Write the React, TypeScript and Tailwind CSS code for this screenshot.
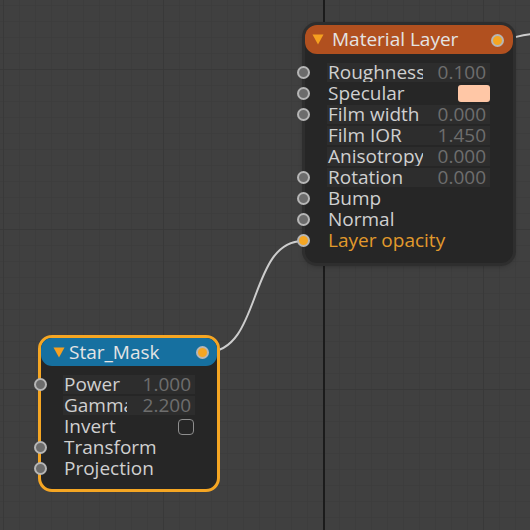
import * as React from "react";

type Row = {
  label: string;
  value?: string;
  socket?: boolean;
  kind?: "num" | "color" | "check" | "plain";
  active?: boolean;
};

const materialRows: Row[] = [
  { label: "Roughness", value: "0.100", socket: true, kind: "num" },
  { label: "Specular", socket: true, kind: "color" },
  { label: "Film width", value: "0.000", socket: true, kind: "num" },
  { label: "Film IOR", value: "1.450", kind: "num" },
  { label: "Anisotropy", value: "0.000", kind: "num" },
  { label: "Rotation", value: "0.000", socket: true, kind: "num" },
  { label: "Bump", socket: true },
  { label: "Normal", socket: true },
  { label: "Layer opacity", socket: true, active: true },
];

const maskRows: Row[] = [
  { label: "Power", value: "1.000", socket: true, kind: "num" },
  { label: "Gamma", value: "2.200", kind: "num" },
  { label: "Invert", kind: "check" },
  { label: "Transform", socket: true },
  { label: "Projection", socket: true },
];

function Socket({ active, className }: { active?: boolean; className?: string }) {
  return (
    <span
      className={
        "absolute h-[13px] w-[13px] rounded-full border-2 border-[#b6b6b6] " +
        (active ? "bg-[#f5a623] " : "bg-[#6c6c6c] ") +
        (className || "")
      }
    />
  );
}

function NodeRow({ row, labelW, socketX }: { row: Row; labelW: number; socketX: string }) {
  return (
    <div className="relative flex h-[21px] items-center">
      {row.socket && <Socket active={row.active} className={socketX} />}
      {row.kind === "num" ? (
        <div className="flex h-[19px] flex-1 items-center bg-[#2d2d2d]">
          <span
            className="overflow-hidden whitespace-nowrap pl-px text-[#d0d0d0]"
            style={{ width: labelW }}
          >
            {row.label}
          </span>
          <span className="flex-1 pr-[4px] text-right text-[#6e6e6e]">{row.value}</span>
        </div>
      ) : (
        <div className="flex flex-1 items-center justify-between pl-px">
          <span className={row.active ? "text-[#e29a2c]" : "text-[#d0d0d0]"}>{row.label}</span>
          {row.kind === "color" && (
            <span className="h-[17px] w-[32px] rounded-[3px] bg-[#ffc7a6]" />
          )}
          {row.kind === "check" && (
            <span className="mr-[1px] h-[16px] w-[16px] rounded-[4px] border-[1.5px] border-[#8e8e8e]" />
          )}
        </div>
      )}
    </div>
  );
}

function Triangle() {
  return (
    <svg width="12" height="11" viewBox="0 0 12 11" className="shrink-0">
      <path d="M0.5 0.5 L11.5 0.5 L6 10.5 Z" fill="#f5a020" />
    </svg>
  );
}

export default function App() {
  return (
    <div
      className="relative h-[530px] w-[530px] overflow-hidden bg-[#404040]"
      style={{ fontFamily: '"Open Sans", "Noto Sans", sans-serif' }}
    >
      <svg className="absolute inset-0" width="530" height="530">
        <defs>
          <pattern id="minor" x="3" y="5" width="16" height="16" patternUnits="userSpaceOnUse">
            <path d="M0 0 L0 16 M0 0 L16 0" stroke="#3a3a3a" strokeWidth="1" fill="none" />
          </pattern>
          <pattern id="major" x="3" y="69" width="160" height="160" patternUnits="userSpaceOnUse">
            <path d="M0 0 L0 160 M0 0 L160 0" stroke="#363636" strokeWidth="1.2" fill="none" />
          </pattern>
        </defs>
        <rect width="530" height="530" fill="url(#minor)" />
        <rect width="530" height="530" fill="url(#major)" />
        <rect x="323" y="0" width="2" height="530" fill="#1b1b1b" />
        <path d="M207 352 C 262 352, 248 241, 303 241" stroke="#cdcdcd" strokeWidth="2" fill="none" />
        <path d="M497 40 C 510 40, 518 35, 532 34" stroke="#cdcdcd" strokeWidth="2" fill="none" />
      </svg>

      {/* Material Layer */}
      <div className="absolute left-[305px] top-[25px] w-[208px] rounded-[12px] bg-[#262626] pb-[12px] text-[19px] leading-none shadow-[0_0_0_3px_#2e2e2e,0_2px_6px_rgba(0,0,0,0.4)]">
        <div className="relative flex h-[29px] items-center gap-[8px] rounded-[12px] bg-[#b1501f] pl-[7px]">
          <Triangle />
          <span className="text-[#e4e4e4]">Material Layer</span>
          <Socket active className="right-[9.5px] top-[8.5px]" />
        </div>
        <div className="flex flex-col pl-[22px] pr-[23px] pt-[8px]">
          {materialRows.map((r) => (
            <NodeRow key={r.label} row={r} labelW={96} socketX="left-[-30.5px] top-[4px]" />
          ))}
        </div>
      </div>

      {/* Star_Mask */}
      <div className="absolute left-[38px] top-[335px] w-[182px] rounded-[14px] border-[3px] border-[#f5a623] bg-[#262626] pb-[10px] text-[19px] leading-none">
        <div className="relative flex h-[28px] items-center gap-[4px] rounded-[11px] bg-[#1670a0] pl-[12px]">
          <Triangle />
          <span className="text-[#e4e4e4]">Star_Mask</span>
          <Socket active className="right-[8.5px] top-[7.5px]" />
        </div>
        <div className="flex flex-col pl-[22px] pr-[22px] pt-[8px]">
          {maskRows.map((r) => (
            <NodeRow key={r.label} row={r} labelW={64} socketX="left-[-29.5px] top-[4px]" />
          ))}
        </div>
      </div>
    </div>
  );
}
